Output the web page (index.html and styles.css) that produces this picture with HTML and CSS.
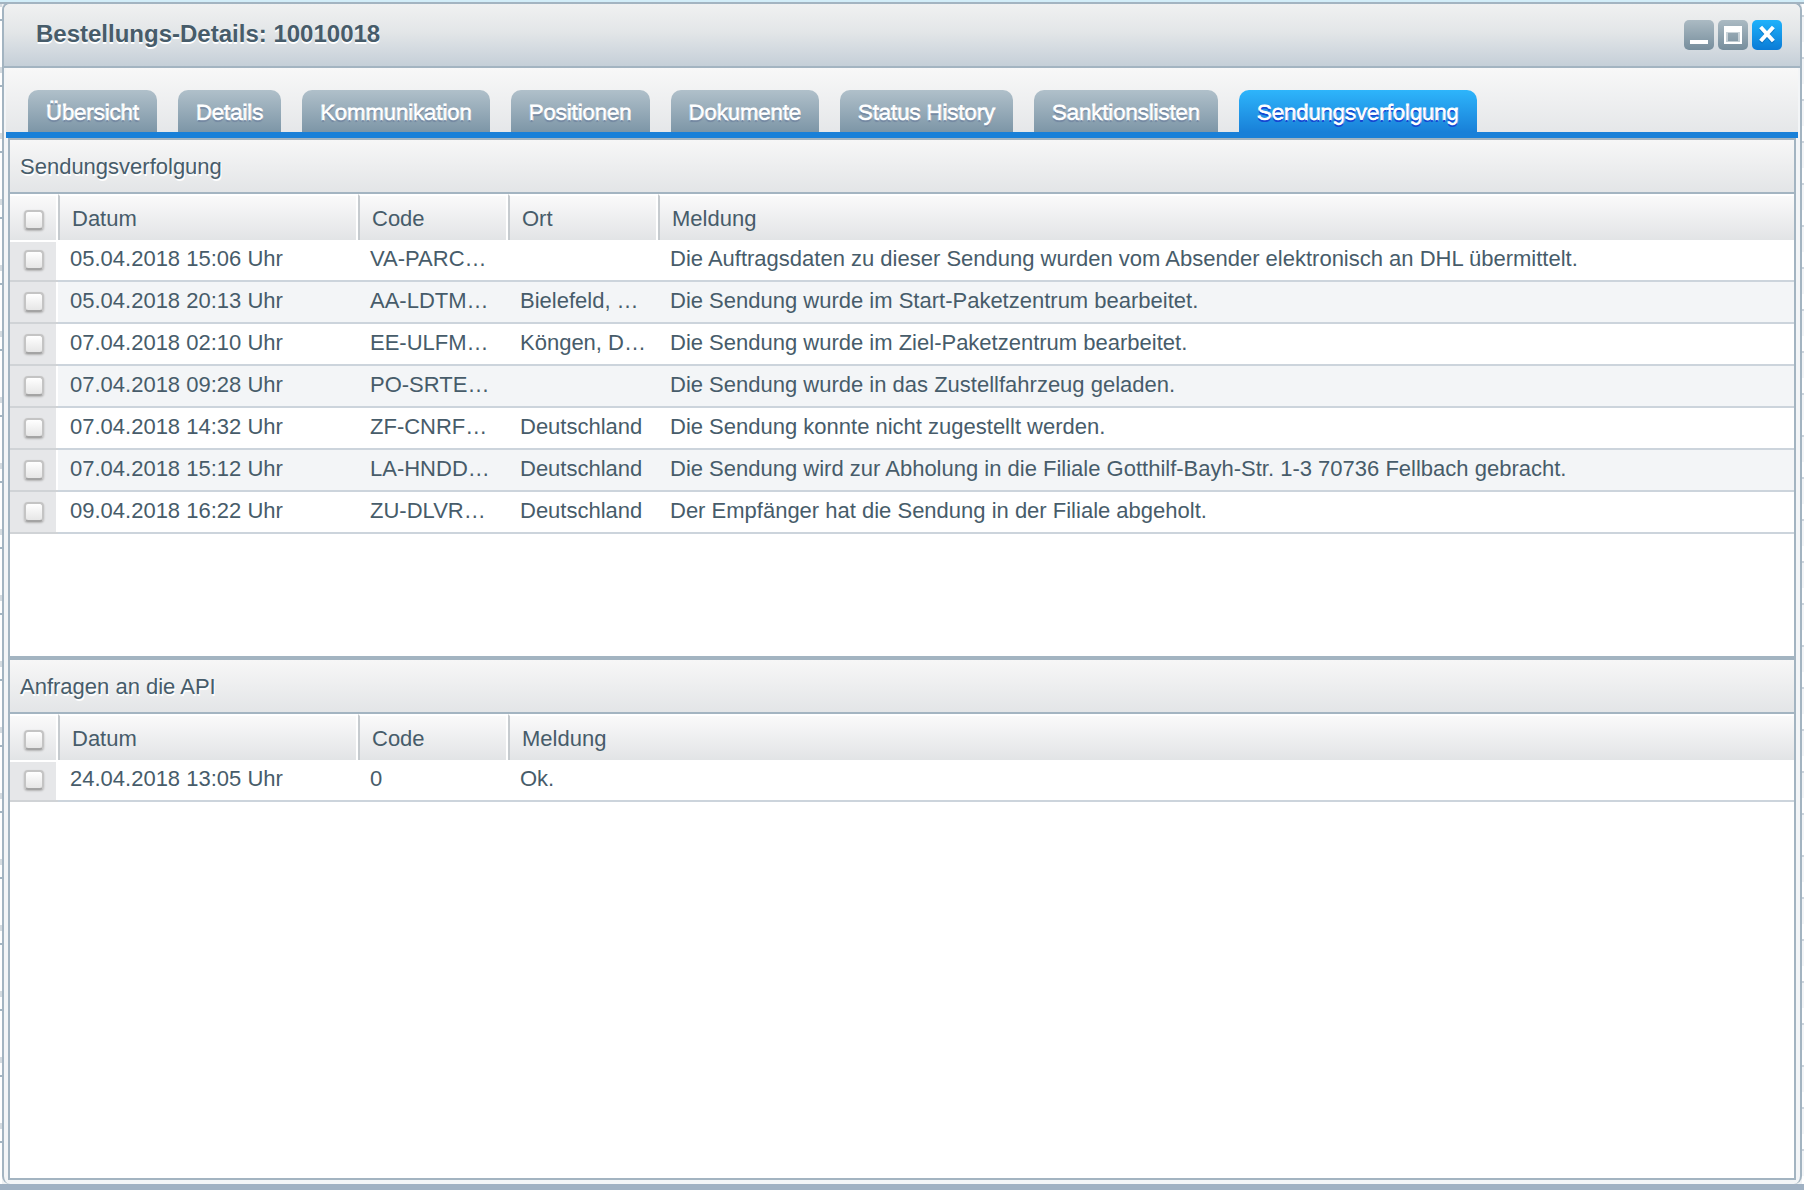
FILE: index.html
```html
<!DOCTYPE html>
<html lang="de">
<head>
<meta charset="utf-8">
<title>Bestellungs-Details: 10010018</title>
<link rel="stylesheet" href="styles.css">
</head>
<body>
<main class="window">
  <header class="titlebar">
    <h1 class="title">Bestellungs-Details: 10010018</h1>
    <div class="tools">
      <button class="tool" type="button" aria-label="Minimieren"><svg viewBox="0 0 30 30"><path d="M6 20h18v4H6z" fill="#fff"/></svg></button>
      <button class="tool" type="button" aria-label="Maximieren"><svg viewBox="0 0 30 30"><path fill-rule="evenodd" d="M6 6h18v18H6zM8 12v10h14V12z" fill="#fff"/><path fill-rule="evenodd" d="M8 12h14v10H8zM10 13v8h10v-8z" fill="#fff" fill-opacity=".5"/></svg></button>
      <button class="tool tool-close" type="button" aria-label="Schließen"><svg viewBox="0 0 30 30"><path d="M10 10l10 11M20 10L10 21" stroke="#0a5fae" stroke-opacity=".5" stroke-width="4" stroke-linecap="square"/><path d="M10 8.500l10 11M20 8.500l-10 11" stroke="#fff" stroke-width="4" stroke-linecap="square"/></svg></button>
    </div>
  </header>
  <nav class="tabs">
    <button class="tab" type="button">Übersicht</button>
    <button class="tab" type="button">Details</button>
    <button class="tab" type="button">Kommunikation</button>
    <button class="tab" type="button">Positionen</button>
    <button class="tab" type="button">Dokumente</button>
    <button class="tab" type="button">Status History</button>
    <button class="tab" type="button">Sanktionslisten</button>
    <button class="tab tab-active" type="button">Sendungsverfolgung</button>
  </nav>
  <div class="panels">
    <section class="panel panel-tracking">
      <h2 class="panel-title">Sendungsverfolgung</h2>
      <table class="grid">
        <colgroup><col class="col-check"><col class="col-date"><col class="col-code"><col class="col-place"><col></colgroup>
        <thead>
          <tr><th><input class="check" type="checkbox" aria-label="Alle auswählen"></th><th>Datum</th><th>Code</th><th>Ort</th><th>Meldung</th></tr>
        </thead>
        <tbody>
          <tr><td><input class="check" type="checkbox" aria-label="Zeile auswählen"></td><td>05.04.2018 15:06 Uhr</td><td>VA-PARC…</td><td></td><td>Die Auftragsdaten zu dieser Sendung wurden vom Absender elektronisch an DHL übermittelt.</td></tr>
          <tr><td><input class="check" type="checkbox" aria-label="Zeile auswählen"></td><td>05.04.2018 20:13 Uhr</td><td>AA-LDTM…</td><td>Bielefeld, …</td><td>Die Sendung wurde im Start-Paketzentrum bearbeitet.</td></tr>
          <tr><td><input class="check" type="checkbox" aria-label="Zeile auswählen"></td><td>07.04.2018 02:10 Uhr</td><td>EE-ULFM…</td><td>Köngen, D…</td><td>Die Sendung wurde im Ziel-Paketzentrum bearbeitet.</td></tr>
          <tr><td><input class="check" type="checkbox" aria-label="Zeile auswählen"></td><td>07.04.2018 09:28 Uhr</td><td>PO-SRTE…</td><td></td><td>Die Sendung wurde in das Zustellfahrzeug geladen.</td></tr>
          <tr><td><input class="check" type="checkbox" aria-label="Zeile auswählen"></td><td>07.04.2018 14:32 Uhr</td><td>ZF-CNRF…</td><td>Deutschland</td><td>Die Sendung konnte nicht zugestellt werden.</td></tr>
          <tr><td><input class="check" type="checkbox" aria-label="Zeile auswählen"></td><td>07.04.2018 15:12 Uhr</td><td>LA-HNDD…</td><td>Deutschland</td><td>Die Sendung wird zur Abholung in die Filiale Gotthilf-Bayh-Str. 1-3 70736 Fellbach gebracht.</td></tr>
          <tr><td><input class="check" type="checkbox" aria-label="Zeile auswählen"></td><td>09.04.2018 16:22 Uhr</td><td>ZU-DLVR…</td><td>Deutschland</td><td>Der Empfänger hat die Sendung in der Filiale abgeholt.</td></tr>
        </tbody>
      </table>
    </section>
    <section class="panel panel-api">
      <h2 class="panel-title">Anfragen an die API</h2>
      <table class="grid">
        <colgroup><col class="col-check"><col class="col-date"><col class="col-code"><col></colgroup>
        <thead>
          <tr><th><input class="check" type="checkbox" aria-label="Alle auswählen"></th><th>Datum</th><th>Code</th><th>Meldung</th></tr>
        </thead>
        <tbody>
          <tr><td><input class="check" type="checkbox" aria-label="Zeile auswählen"></td><td>24.04.2018 13:05 Uhr</td><td>0</td><td>Ok.</td></tr>
        </tbody>
      </table>
    </section>
  </div>
</main>
</body>
</html>
```
FILE: styles.css
```css
* { box-sizing: border-box; }

/* The grids behind the window show as thin strips along its edges. */
body {
  display: flex;
  min-height: 100vh;
  margin: 0;
  padding: 2px 2px 6px;
  background:
    linear-gradient(to bottom, #d2edf8 2px, #a3b4c1 2px, #a3b4c1 4px, transparent 4px),
    linear-gradient(to top, #a0b1c3 6px, transparent 6px),
    repeating-linear-gradient(#fff 0 1px, #d5dbe0 1px 7px, #fff 7px 19px, #a3b4c1 19px 21px, #fff 21px 66px) 0 0 / 2px 100% no-repeat,
    repeating-linear-gradient(#fff 0 15px, #ccd4dc 15px 17px, #f3f5f7 17px 42px) 100% 0 / 2px 100% no-repeat,
    #f0f2f4;
  color: #475c6a;
  font: 22px/26px "Liberation Sans", Arial, sans-serif;
}

.window {
  display: flex;
  flex: 1;
  flex-direction: column;
  min-width: 0;
  border: 2px solid #a3b4c1;
  border-bottom-width: 0;
  border-radius: 8px;
  background: #f3f5f7;
  overflow: hidden;
}

.titlebar {
  display: flex;
  align-items: flex-start;
  justify-content: space-between;
  height: 64px;
  padding: 16px 18px 0 32px;
  border-bottom: 2px solid #a3b4c1;
  background: linear-gradient(#f0f1f1, #e3e6e8 45%, #c5cfd8);
}

.title {
  margin: 0;
  font-size: 24px;
  line-height: 28px;
  text-shadow: 0 2px 0 #fff;
}

.tools { display: flex; gap: 4px; }

.tool {
  width: 30px;
  height: 30px;
  padding: 0;
  border: 0;
  border-radius: 5px;
  background: linear-gradient(#abbac3, #768d9c);
}

.tool svg { display: block; width: 30px; height: 30px; }

.tool-close { background: linear-gradient(#1fb2fb, #0b7bd6); }

.tabs {
  display: flex;
  gap: 21px;
  margin: 0 2px;
  padding: 22px 22px 0;
  border-bottom: 6px solid #1980d8;
  background: linear-gradient(#f8f8f8, #e5e7e9);
}

.tab {
  height: 42px;
  padding: 4px 18px 0;
  border: 0;
  border-radius: 10px 10px 0 0;
  background: linear-gradient(#b0c0ca, #7d96a7);
  color: #fff;
  font: inherit;
  text-shadow: 0 2px 1px #7286a0;
  -webkit-text-stroke: 1px #fff;
  paint-order: stroke fill;
  white-space: nowrap;
}

.tab-active {
  background: linear-gradient(#2eb5fb, #1980d8);
  text-shadow: 0 2px 0 #1546d2;
}

.panels {
  display: flex;
  flex: 1;
  flex-direction: column;
  margin: 0 4px 4px;
  border: 2px solid #a3b4c1;
  background: #fff;
}

.panel-tracking {
  min-height: 520px;
  border-bottom: 4px solid #a3b4c1;
}

.panel-title {
  height: 54px;
  margin: 0;
  padding: 14px 10px 0;
  border-bottom: 2px solid #a3b4c1;
  background: linear-gradient(#f7f7f7, #e3e5e7);
  font-size: 22px;
  font-weight: normal;
  text-shadow: 1px 2px 0 #fff;
}

.grid {
  width: 100%;
  border-spacing: 0;
  table-layout: fixed;
}

.col-check { width: 48px; }
.col-date { width: 300px; }
.col-code, .col-place { width: 150px; }

th {
  height: 46px;
  padding: 1px 12px 0;
  border-top: 2px solid #fff;
  border-left: 2px solid #c6cbcf;
  background: linear-gradient(#fafafa, #e2e4e6);
  box-shadow: inset -2px 0 0 #fff;
  font-weight: normal;
  text-align: left;
}

td {
  height: 42px;
  padding: 0 12px 2px;
  border-bottom: 2px solid #ccd4dc;
  white-space: nowrap;
}

th:first-child {
  padding: 4px 0 0 14px;
  border-left: 0;
}

th:last-child { box-shadow: none; }

td:first-child {
  padding: 0 0 0 14px;
  border-bottom-color: #d0d3d6;
  background: #e6e7e9;
  box-shadow: inset -2px 0 0 #fff;
}

tbody tr:first-child td:first-child { box-shadow: inset -2px 2px 0 #fff; }

tbody tr:nth-child(even) { background: #f3f5f7; }

.check {
  display: block;
  width: 20px;
  height: 20px;
  margin: 0;
  border: 2px solid #c4c4c4;
  border-bottom-color: #a4a4a4;
  border-radius: 4px;
  background: linear-gradient(#fff, #e6e6e6);
  box-shadow: 0 1px 2px #b4b4b4;
  appearance: none;
}
```
